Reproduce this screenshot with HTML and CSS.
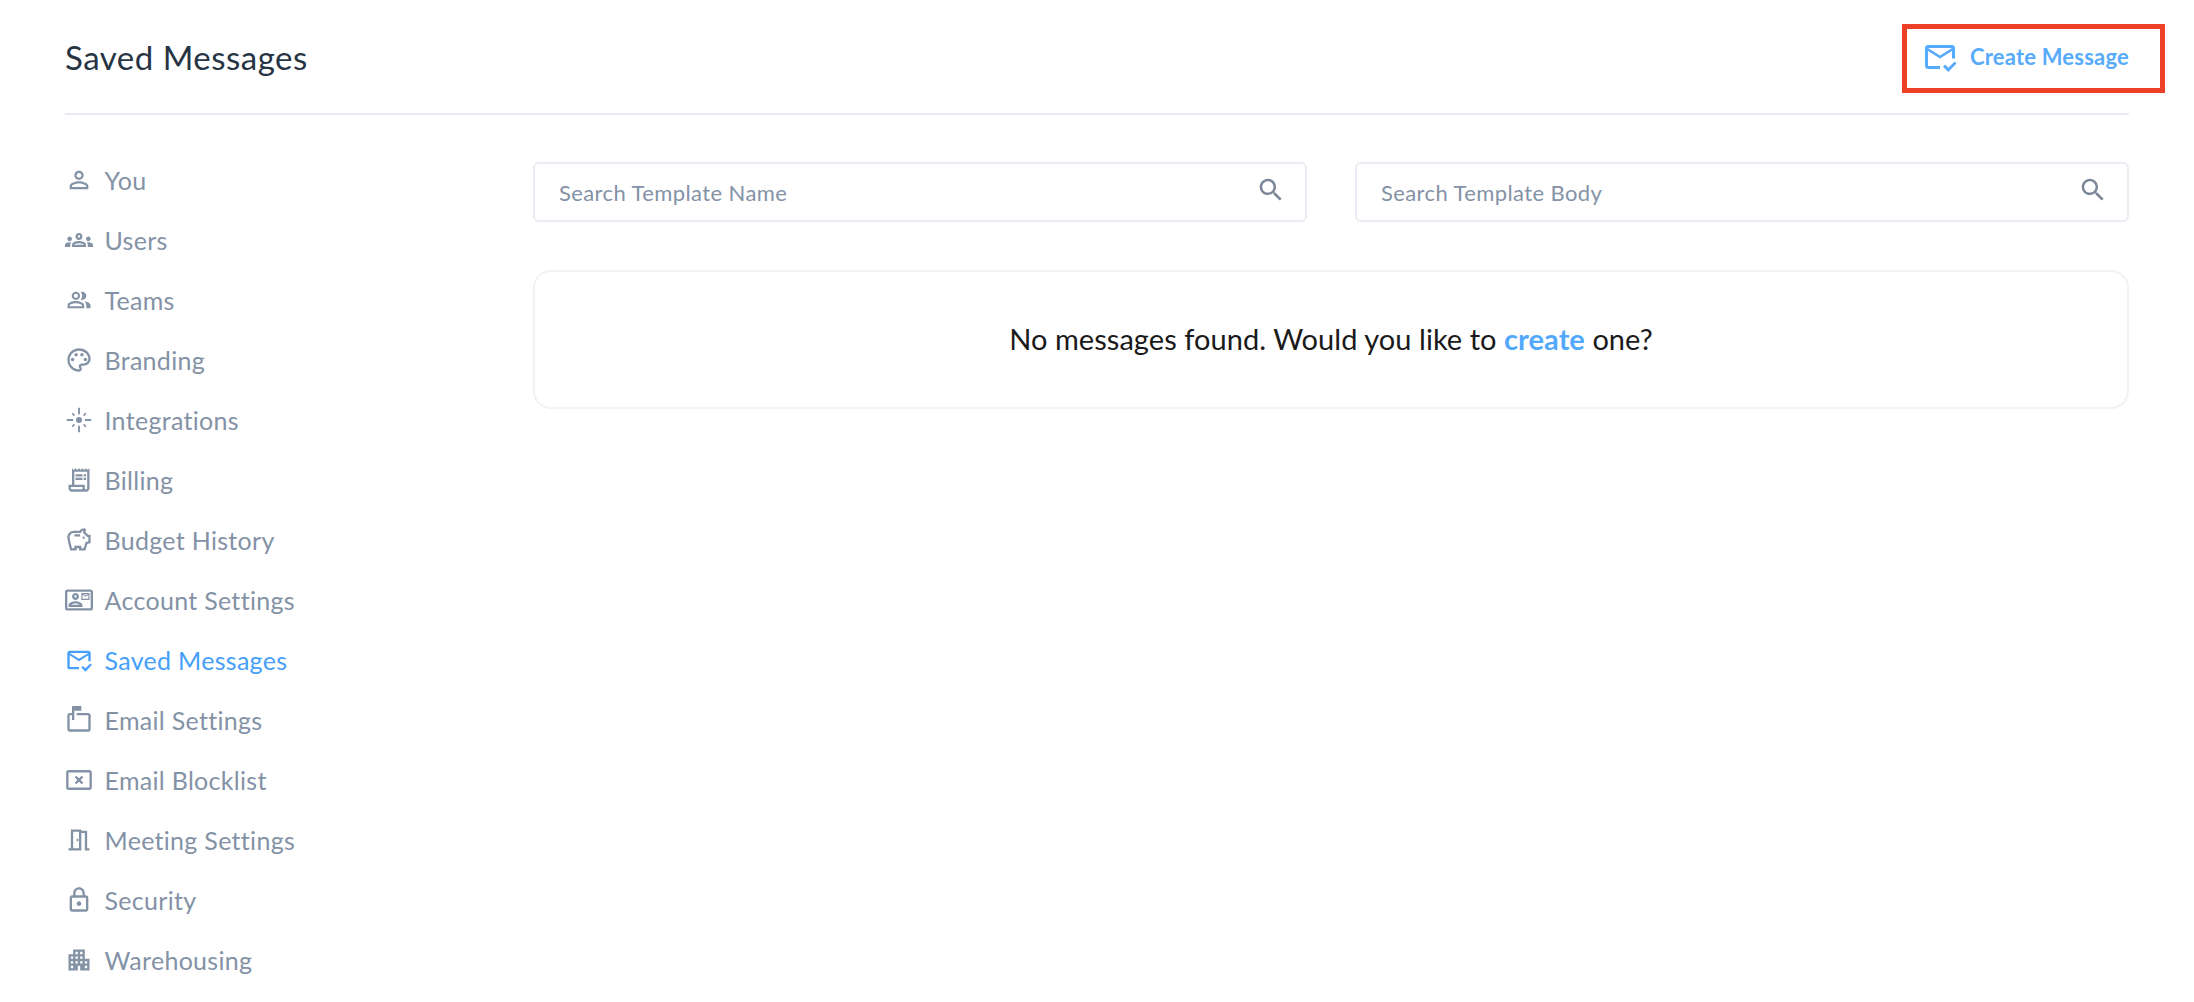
FILE: index.html
```html
<!DOCTYPE html>
<html lang="en">
<head>
<meta charset="utf-8">
<title>Saved Messages</title>
<link rel="stylesheet" href="styles.css">
</head>
<body>
<div class="page">
  <header class="topbar">
    <h1 class="title">Saved Messages</h1>
    <a class="create" href="#">
      <svg class="create-icon" viewBox="0 0 24 24"><path d="M12 18H4V8l8 5 8-5v5h2V6c0-1.1-.9-2-2-2H4c-1.1 0-2 .9-2 2v12c0 1.1.9 2 2 2h8v-2zm8-12-8 5-8-5h16zm-2.46 16-3.54-3.54 1.41-1.41 2.12 2.12 4.24-4.24L23 16.34 17.54 22z"/></svg>
      <span>Create Message</span>
      <span class="highlight"></span>
    </a>
  </header>
  <div class="content">
    <nav class="sidebar">
      <a class="nav-item" href="#"><svg class="nav-icon" viewBox="0 0 24 24"><path d="M12 5.9c1.16 0 2.1.94 2.1 2.1s-.94 2.1-2.1 2.1S9.9 9.16 9.9 8s.94-2.1 2.1-2.1m0 9c2.97 0 6.1 1.46 6.1 2.1v1.1H5.9V17c0-.64 3.13-2.1 6.1-2.1M12 4C9.79 4 8 5.79 8 8s1.79 4 4 4 4-1.79 4-4-1.79-4-4-4zm0 9c-2.67 0-8 1.34-8 4v3h16v-3c0-2.66-5.33-4-8-4z"/></svg><span>You</span></a>
      <a class="nav-item" href="#"><svg class="nav-icon" viewBox="0 0 24 24"><path d="M4 13c1.1 0 2-.9 2-2s-.9-2-2-2-2 .9-2 2 .9 2 2 2zm1.13 1.1c-.37-.06-.74-.1-1.13-.1-.99 0-1.93.21-2.78.58C.48 14.9 0 15.62 0 16.43V18h4.5v-1.61c0-.83.23-1.61.63-2.29zM20 13c1.1 0 2-.9 2-2s-.9-2-2-2-2 .9-2 2 .9 2 2 2zm4 3.43c0-.81-.48-1.53-1.22-1.85-.85-.37-1.79-.58-2.78-.58-.39 0-.76.04-1.13.1.4.68.63 1.46.63 2.29V18H24v-1.57zm-7.76-2.78c-1.17-.52-2.61-.9-4.24-.9-1.63 0-3.07.39-4.24.9C6.68 14.13 6 15.21 6 16.39V18h12v-1.61c0-1.18-.68-2.26-1.76-2.74zM8.07 16c.09-.23.13-.39.91-.69.97-.38 1.99-.56 3.02-.56s2.05.18 3.02.56c.77.3.81.46.91.69H8.07zM12 8c.55 0 1 .45 1 1s-.45 1-1 1-1-.45-1-1 .45-1 1-1m0-2c-1.66 0-3 1.34-3 3s1.34 3 3 3 3-1.34 3-3-1.34-3-3-3z"/></svg><span>Users</span></a>
      <a class="nav-item" href="#"><svg class="nav-icon" viewBox="-1.4 -1.4 26.8 26.8"><path d="M16.67 13.13C18.04 14.06 19 15.32 19 17v3h4v-3c0-2.18-3.57-3.47-6.33-3.87zM15 12c2.21 0 4-1.79 4-4s-1.79-4-4-4c-.47 0-.91.1-1.33.24C14.5 5.27 15 6.58 15 8s-.5 2.73-1.33 3.76c.42.14.86.24 1.33.24zM9 12c2.21 0 4-1.79 4-4s-1.79-4-4-4-4 1.79-4 4 1.79 4 4 4zm0-6c1.1 0 2 .9 2 2s-.9 2-2 2-2-.9-2-2 .9-2 2-2zM9 13c-2.67 0-8 1.34-8 4v3h16v-3c0-2.66-5.33-4-8-4zm6 5H3v-.99C3.2 16.29 6.3 15 9 15s5.8 1.29 6 2v1z"/></svg><span>Teams</span></a>
      <a class="nav-item" href="#"><svg class="nav-icon" viewBox="0 0 24 24"><path d="M12 22C6.49 22 2 17.51 2 12S6.49 2 12 2s10 4.04 10 9c0 3.31-2.69 6-6 6h-1.77c-.28 0-.5.22-.5.5 0 .12.05.23.13.33.41.47.64 1.06.64 1.67 0 1.38-1.12 2.5-2.5 2.5zm0-18c-4.41 0-8 3.59-8 8s3.59 8 8 8c.28 0 .5-.22.5-.5 0-.16-.08-.28-.14-.35-.41-.46-.63-1.05-.63-1.65 0-1.38 1.12-2.5 2.5-2.5H16c2.21 0 4-1.79 4-4 0-3.86-3.59-7-8-7z"/><circle cx="6.5" cy="11.5" r="1.5"/><circle cx="9.5" cy="7.5" r="1.5"/><circle cx="14.5" cy="7.5" r="1.5"/><circle cx="17.5" cy="11.5" r="1.5"/></svg><span>Branding</span></a>
      <a class="nav-item" href="#"><svg class="nav-icon" viewBox="0 0 24 24"><circle cx="12" cy="12" r="2.6"/><path d="M11.200 1.500h1.600v5.500h-1.600zM11.200 17h1.600v5.500h-1.600zM1.500 11.200H7v1.600H1.500zM17 11.200h5.500v1.600H17zM6.600 5.700l2 2-1 1-2-2zM17.400 5.700l1 1-2 2-1-1zM7.600 15.300l1 1-2 2-1-1zM16.400 15.300l2 2-1 1-2-2z"/></svg><span>Integrations</span></a>
      <a class="nav-item" href="#"><svg class="nav-icon" viewBox="0 0 24 24"><path d="M19.5 3.5 18 2l-1.5 1.5L15 2l-1.5 1.5L12 2l-1.5 1.5L9 2 7.5 3.5 6 2v14H3v3c0 1.66 1.34 3 3 3h12c1.66 0 3-1.34 3-3V2l-1.5 1.5zM15 20H6c-.55 0-1-.45-1-1v-1h10v2zm4-1c0 .55-.45 1-1 1s-1-.45-1-1v-3H8V5h11v14z"/><path d="M9 7h6v2H9zM16 7h2v2h-2zM9 10h6v2H9zM16 10h2v2h-2z"/></svg><span>Billing</span></a>
      <a class="nav-item" href="#"><svg class="nav-icon" viewBox="0 0 24 24"><path d="M15 10c0-.55.45-1 1-1s1 .45 1 1-.45 1-1 1-1-.45-1-1zM8 9h5V7H8v2zm14-1.5v6.97l-2.82.94L17.5 21H12v-2h-2v2H4.5S2 12.54 2 9.5 4.46 4 7.5 4h5c.91-1.21 2.36-2 4-2 .83 0 1.5.67 1.5 1.5 0 .21-.04.4-.12.58-.14.32-.26.69-.32 1.09l2.27 2.33H22zm-2 2h-1l-3.5-3.5c0-.65.09-1.29.26-1.91-.97.25-1.76.97-2.09 1.91H7.5C5.57 6 4 7.57 4 9.5c0 1.88 1.22 6.65 2.01 9.5H8v-2h6v2h2.01l1.55-5.15 2.44-.82V9.5z"/></svg><span>Budget History</span></a>
      <a class="nav-item" href="#"><svg class="nav-icon" viewBox="0 0 24 24"><path d="M22 3H2C.9 3 0 3.9 0 5v14c0 1.1.9 2 2 2h20c1.1 0 1.99-.9 1.99-2L24 5c0-1.1-.9-2-2-2zm0 16H2V5h20v14z"/><path d="M9 12c1.65 0 3-1.35 3-3s-1.35-3-3-3-3 1.35-3 3 1.35 3 3 3zm0-4c.55 0 1 .45 1 1s-.45 1-1 1-1-.45-1-1 .45-1 1-1zm6 8.59c0-2.5-3.97-3.58-6-3.58s-6 1.08-6 3.58V18h12v-1.41zM5.48 16c.74-.5 2.22-1 3.52-1s2.77.49 3.52 1H5.48z"/><path d="M14 6h7v6h-7zm1 1.6V11h5V7.6l-2.5 1.7zM15.6 7l1.9 1.2L19.4 7z" fill-rule="evenodd"/></svg><span>Account Settings</span></a>
      <a class="nav-item active" href="#"><svg class="nav-icon" viewBox="0 0 24 24"><path d="M12 18H4V8l8 5 8-5v5h2V6c0-1.1-.9-2-2-2H4c-1.1 0-2 .9-2 2v12c0 1.1.9 2 2 2h8v-2zm8-12-8 5-8-5h16zm-2.46 16-3.54-3.54 1.41-1.41 2.12 2.12 4.24-4.24L23 16.34 17.54 22z"/></svg><span>Saved Messages</span></a>
      <a class="nav-item" href="#"><svg class="nav-icon" viewBox="0 0 24 24"><path d="M20 6H10v2h10v12H4V8h2v4h2V4h6V0H6v6H4c-1.1 0-2 .9-2 2v12c0 1.1.9 2 2 2h16c1.1 0 2-.9 2-2V8c0-1.1-.9-2-2-2z"/></svg><span>Email Settings</span></a>
      <a class="nav-item" href="#"><svg class="nav-icon" viewBox="0 0 24 24"><path d="M3 3.500h18c1.100 0 2 .9 2 2v13c0 1.100-.9 2-2 2H3c-1.100 0-2-.9-2-2v-13c0-1.100.9-2 2-2zm0 2v13h18v-13zM9.700 8.300l2.300 2.300 2.300-2.300 1.400 1.400-2.300 2.300 2.300 2.300-1.400 1.400-2.300-2.300-2.300 2.300-1.400-1.400 2.300-2.300-2.300-2.300z" fill-rule="evenodd"/></svg><span>Email Blocklist</span></a>
      <a class="nav-item" href="#"><svg class="nav-icon" viewBox="0 0 24 24"><path d="M14 6v15H3v-2h2V3h9v1h5v15h2v2h-4V6h-3zM7 5v14h5V5zm3 6h1.500v2H10z" fill-rule="evenodd"/></svg><span>Meeting Settings</span></a>
      <a class="nav-item" href="#"><svg class="nav-icon" viewBox="0 0 24 24"><path d="M18 8h-1V6c0-2.760-2.240-5-5-5S7 3.240 7 6v2H6c-1.100 0-2 .9-2 2v10c0 1.100.9 2 2 2h12c1.100 0 2-.9 2-2V10c0-1.100-.9-2-2-2zM9 6c0-1.660 1.340-3 3-3s3 1.340 3 3v2H9V6zm9 14H6V10h12v10zm-6-3c1.100 0 2-.9 2-2s-.9-2-2-2-2 .9-2 2 .9 2 2 2z"/></svg><span>Security</span></a>
      <a class="nav-item" href="#"><svg class="nav-icon" viewBox="0 0 24 24"><path d="M17 11V3H7v4H3v14h8v-4h2v4h8V11h-4zM7 19H5v-2h2v2zm0-4H5v-2h2v2zm0-4H5V9h2v2zm4 4H9v-2h2v2zm0-4H9V9h2v2zm0-4H9V5h2v2zm4 8h-2v-2h2v2zm0-4h-2V9h2v2zm0-4h-2V5h2v2zm4 12h-2v-2h2v2zm0-4h-2v-2h2v2z"/></svg><span>Warehousing</span></a>
    </nav>
    <main class="main">
      <div class="filters">
        <label class="search">
          <input class="search-input" type="text" placeholder="Search Template Name">
          <svg class="search-icon" viewBox="0 0 24 24"><path d="M15.500 14h-.79l-.28-.27C15.410 12.590 16 11.110 16 9.500 16 5.910 13.090 3 9.500 3S3 5.910 3 9.500 5.910 16 9.500 16c1.610 0 3.090-.59 4.230-1.570l.27.28v.79l5 4.990L20.490 19l-4.990-5zm-6 0C7.010 14 5 11.990 5 9.500S7.010 5 9.500 5 14 7.010 14 9.500 11.990 14 9.500 14z"/></svg>
        </label>
        <label class="search">
          <input class="search-input" type="text" placeholder="Search Template Body">
          <svg class="search-icon" viewBox="0 0 24 24"><path d="M15.500 14h-.79l-.28-.27C15.410 12.590 16 11.110 16 9.500 16 5.910 13.090 3 9.500 3S3 5.910 3 9.500 5.910 16 9.500 16c1.610 0 3.090-.59 4.230-1.570l.27.28v.79l5 4.990L20.490 19l-4.990-5zm-6 0C7.010 14 5 11.990 5 9.500S7.010 5 9.500 5 14 7.010 14 9.500 11.990 14 9.500 14z"/></svg>
        </label>
      </div>
      <section class="empty">
        <p class="empty-text">No messages found. Would you like to <a class="empty-link" href="#">create</a> one?</p>
      </section>
    </main>
  </div>
</div>
</body>
</html>
```
FILE: styles.css
```css
* { box-sizing: border-box; }
html, body { margin: 0; height: 100%; background: #fff; overflow: hidden; }
body { font-family: "Lato", "Noto Sans", sans-serif; color: #1f2d3d; }
a { text-decoration: none; }

.page { padding: 0 65px; }

.topbar {
  display: flex;
  align-items: center;
  justify-content: space-between;
  height: 115px;
  border-bottom: 2px solid #e8ebf1;
}
.title { margin: 0; font-size: 33px; font-weight: 400; letter-spacing: 0.5px; color: #273444; }

.create {
  position: relative;
  display: flex;
  align-items: center;
  gap: 12px;
  font-size: 22px;
  font-weight: 700;
  letter-spacing: 0.2px;
  color: #57abfb;
}
.create-icon { width: 36px; height: 36px; fill: #57abfb; }
.highlight {
  position: absolute;
  left: -20px;
  right: -36px;
  top: -15px;
  bottom: -18px;
  border: 5px solid #ee4026;
}

.content { display: flex; }

.sidebar {
  flex: 0 0 468px;
  display: flex;
  flex-direction: column;
  padding-top: 35px;
}
.nav-item {
  display: flex;
  align-items: center;
  gap: 11.5px;
  height: 60px;
  font-size: 25px;
  letter-spacing: 0.3px;
  color: #8492a6;
}
.nav-icon { width: 28px; height: 28px; fill: #8492a6; flex: none; }
.nav-item.active { color: #459ffb; }
.nav-item.active .nav-icon { fill: #459ffb; }

.main { flex: 1; padding-top: 47px; }

.filters { display: grid; grid-template-columns: 1fr 1fr; gap: 48px; }
.search { position: relative; display: block; }
.search-input {
  display: block;
  width: 100%;
  height: 60px;
  padding: 0 60px 0 24px;
  border: 2px solid #e9ecf2;
  border-radius: 6px;
  outline: none;
  font: 400 22px "Lato", "Noto Sans", sans-serif;
  letter-spacing: 0.4px;
  color: #1f2d3d;
}
.search-input::placeholder { color: #8492a6; opacity: 1; }
.search-icon {
  position: absolute;
  right: 21px;
  top: 13px;
  width: 30px;
  height: 30px;
  fill: #7b8698;
}

.empty {
  margin-top: 48px;
  height: 139px;
  display: flex;
  align-items: center;
  justify-content: center;
  border: 2px solid #f1f3f7;
  border-radius: 18px;
}
.empty-text { margin: 0 0 3px; font-size: 29px; letter-spacing: 0.05px; color: #1a1a1a; }
.empty-link { color: #52a8fb; font-weight: 700; }
```
